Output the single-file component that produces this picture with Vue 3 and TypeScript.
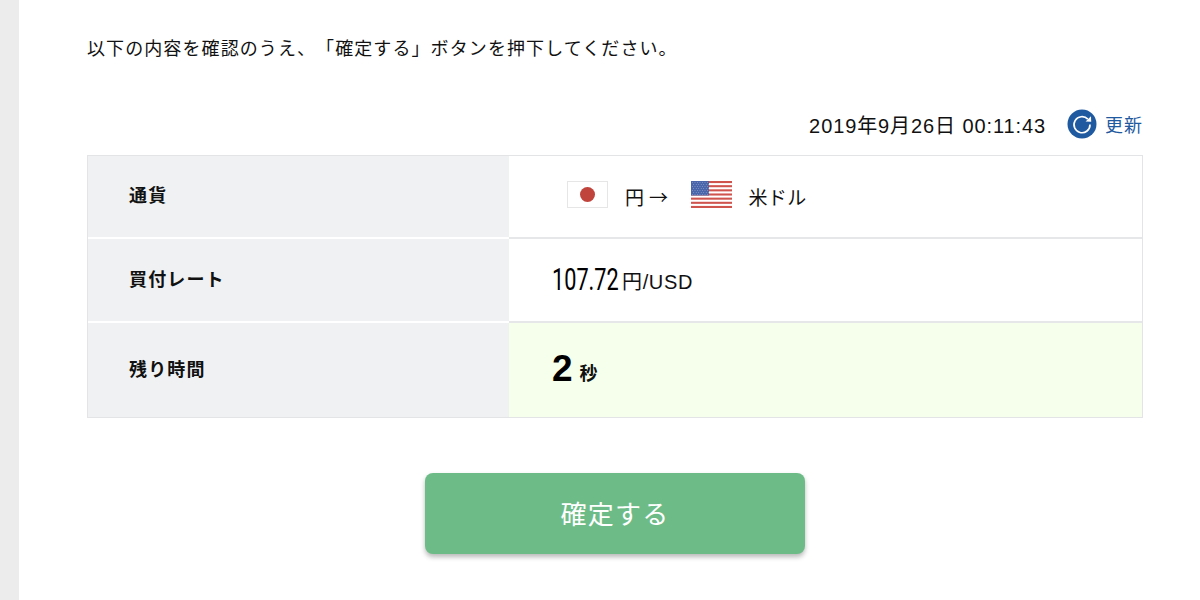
<script setup lang="ts">
const stripes: number[] = [0, 1, 2, 3, 4, 5, 6].map((n) => (n * 2 * 27) / 13)
const stripeHeight: number = 27 / 13
const stars: { x: number; y: number }[] = []
for (let r = 0; r < 7; r++) {
  for (let c = 0; c < 7; c++) {
    stars.push({ x: 1.5 + c * 2.5 + (r % 2 ? 1.2 : 0), y: 1.5 + r * 2 })
  }
}
</script>

<template>
  <div class="page">
    <aside class="rail"></aside>
    <main class="content">
      <p class="lead">以下の内容を確認のうえ、「確定する」ボタンを押下してください。</p>
      <div class="stamp">
        <span class="time">2019年9月26日 00:11:43</span>
        <a class="refresh">
          <svg class="refresh-icon" viewBox="0 0 30 30" width="30" height="30">
            <circle cx="15" cy="15" r="14.5" fill="#1f5aa0" />
            <path d="M20.8 10.2A8 8 0 1 0 23 15.5" fill="none" stroke="#fff" stroke-width="1.7" />
            <path d="M18.6 12.6l5.6 .2-.2-5.6z" fill="#fff" />
          </svg>
          <span>更新</span>
        </a>
      </div>
      <div class="table">
        <div class="label row-a">通貨</div>
        <div class="value row-a currency">
          <svg class="flag jp" viewBox="0 0 41 27" width="41" height="27">
            <rect x=".5" y=".5" width="40" height="26" fill="#fff" stroke="#e6e6e6" />
            <circle cx="20.5" cy="13.5" r="7.5" fill="#c0443c" />
          </svg>
          <span class="cur-a">円 →</span>
          <svg class="flag us" viewBox="0 0 41 27" width="41" height="27">
            <rect width="41" height="27" fill="#fff" />
            <rect v-for="s in stripes" :key="s" x="0" :y="s" width="41" :height="stripeHeight" fill="#d0544e" />
            <rect width="18" height="14.5" fill="#4a66ab" />
            <circle v-for="(d, i) in stars" :key="i" :cx="d.x" :cy="d.y" r=".45" fill="#aab8d8" />
          </svg>
          <span class="cur-b">米ドル</span>
        </div>
        <div class="label row-b">買付レート</div>
        <div class="value row-b rate">
          <span class="rate-num"><span class="rate-glyphs">107.72</span></span>
          <span class="rate-unit">円/USD</span>
        </div>
        <div class="label row-c">残り時間</div>
        <div class="value row-c remain">
          <span class="sec-num">2</span>
          <span class="sec-unit">秒</span>
        </div>
      </div>
      <div class="actions">
        <button class="confirm" type="button">確定する</button>
      </div>
    </main>
  </div>
</template>

<style>
html, body { margin: 0; background: #fff; }
</style>

<style scoped>
.page {
  display: flex;
  width: 1200px;
  height: 600px;
  overflow: hidden;
  background: #fff;
  color: #111;
  font-family: "Noto Sans CJK JP", "Liberation Sans", sans-serif;
  letter-spacing: 0.04em;
  text-spacing-trim: space-all;
}
.rail {
  width: 19px;
  flex: none;
  background: #ececec;
}
.content {
  width: 1056px;
  margin-left: 68px;
  display: flex;
  flex-direction: column;
}
.lead {
  margin: 35px 0 0;
  font-size: 18px;
  line-height: 25px;
  letter-spacing: 1.09px;
}
.stamp {
  margin-top: 49px;
  height: 30px;
  display: flex;
  justify-content: flex-end;
  align-items: center;
  font-size: 18px;
}
.time {
  font-family: "Liberation Sans", "Noto Sans CJK JP", sans-serif;
  font-size: 20px;
  letter-spacing: 0.9px;
}
.refresh {
  margin-left: 21px;
  display: flex;
  align-items: center;
  gap: 8px;
  color: #1f5aa0;
  letter-spacing: 1px;
}
.table {
  margin-top: 16px;
  display: grid;
  grid-template-columns: 421px 1fr;
  grid-template-rows: 83px 84px 94px;
  border: 1px solid #e2e4e6;
}
.label {
  background: #eff1f3;
  font-weight: 700;
  font-size: 18px;
  letter-spacing: 1.15px;
  display: flex;
  align-items: center;
  padding-left: 41px;
  padding-bottom: 5px;
}
.label.row-a, .label.row-b { border-bottom: 2px solid #fff; }
.value { display: flex; align-items: center; padding-left: 43px; }
.value.row-a, .value.row-b { border-bottom: 2px solid #e6e7e9; }
.currency { font-size: 19px; letter-spacing: 0.4px; padding-left: 58px; }
.flag { display: block; margin-bottom: 5px; }
.cur-a { margin-left: 17px; margin-right: 23px; }
.cur-b { margin-left: 16px; }
.rate { gap: 4px; }
.rate-num {
  display: inline-block;
  width: 66px;
  margin-top: -2px;
  font-family: Roboto, "Liberation Sans", sans-serif;
  font-weight: 400;
  font-size: 31px;
  letter-spacing: 0;
  color: #000;
}
.rate-glyphs {
  display: inline-block;
  transform: scaleX(0.7);
  transform-origin: left center;
}
.rate-unit { font-family: "Liberation Sans", "Noto Sans CJK JP", sans-serif; font-size: 20px; }
.row-c.value { background: #f6ffec; padding-bottom: 2px; }
.remain { gap: 7px; }
.sec-num { font-family: "Liberation Sans", sans-serif; font-weight: 700; font-size: 37px; letter-spacing: 0; color: #000; }
.sec-unit { font-weight: 700; font-size: 18px; margin-top: 6px; }
.actions {
  margin-top: 55px;
  display: flex;
  justify-content: center;
}
.confirm {
  width: 380px;
  height: 81px;
  padding: 0 0 3px;
  border: 0;
  border-radius: 8px;
  background: #6dbc87;
  color: #fff;
  font: inherit;
  font-size: 26px;
  letter-spacing: 0.05em;
  box-shadow: 0 3px 5px rgba(0, 0, 0, 0.28);
}
</style>
